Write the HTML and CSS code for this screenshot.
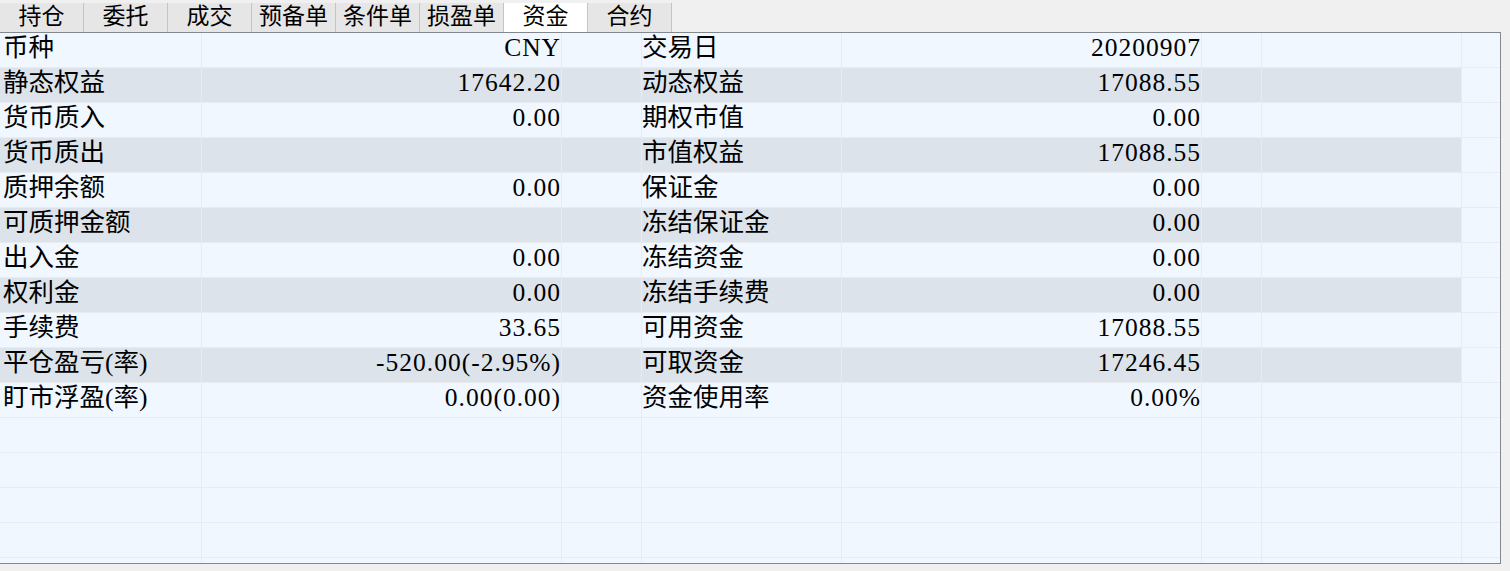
FILE: index.html
```html
<!DOCTYPE html>
<html lang="zh-CN">
  <head>
    <meta charset="UTF-8" />
    <title>资金</title>
    <link rel="stylesheet" href="styles.css">
  </head>
  <body>
    <div class="tabs">
      <div class="tab">持仓</div>
      <div class="tab">委托</div>
      <div class="tab">成交</div>
      <div class="tab">预备单</div>
      <div class="tab">条件单</div>
      <div class="tab">损盈单</div>
      <div class="tab active">资金</div>
      <div class="tab">合约</div>
    </div>
    <div class="grid" id="grid"></div>
    <script>
      const rows = [
        ["币种", "CNY", "交易日", "20200907"],
        ["静态权益", "17642.20", "动态权益", "17088.55"],
        ["货币质入", "0.00", "期权市值", "0.00"],
        ["货币质出", "", "市值权益", "17088.55"],
        ["质押余额", "0.00", "保证金", "0.00"],
        ["可质押金额", "", "冻结保证金", "0.00"],
        ["出入金", "0.00", "冻结资金", "0.00"],
        ["权利金", "0.00", "冻结手续费", "0.00"],
        ["手续费", "33.65", "可用资金", "17088.55"],
        ["平仓盈亏(率)", "-520.00(-2.95%)", "可取资金", "17246.45"],
        ["盯市浮盈(率)", "0.00(0.00)", "资金使用率", "0.00%"],
      ];
      const grid = document.getElementById("grid");

      // 11 data rows, then empty rows to fill the panel
      for (let i = 0; i < 16; i++) {
        const data = rows[i] || ["", "", "", ""];
        const row = document.createElement("div");
        row.className = "row";
        if (i % 2 === 1 && i < rows.length) row.classList.add("alt");
        const cells = [
          [data[0], "label first"],
          [data[1], "value"],
          ["", ""],
          [data[2], "label"],
          [data[3], "value"],
          ["", ""],
          ["", ""],
          ["", "last"],
        ];
        cells.forEach(([text, cls]) => {
          const cell = document.createElement("div");
          cell.className = "cell " + cls;
          cell.textContent = text;
          row.appendChild(cell);
        });
        grid.appendChild(row);
      }
    </script>
  </body>
</html>
```

FILE: styles.css
```css
body {
  margin: 0;
  background: #f0f0f0;
  font-family: "Liberation Serif", "Noto Sans CJK SC", serif;
  color: #000;
  overflow: hidden;
}

.tabs {
  display: flex;
  margin-top: 3px;
  height: 29px;
}

.tab {
  width: 84px;
  box-sizing: border-box;
  border-right: 1px solid #c4c4c4;
  background: #e6e6e6;
  text-align: center;
  font-size: 23px;
  line-height: 28px;
}

.tab.active {
  background: #ffffff;
}

.grid {
  width: 1501px;
  height: 532px;
  box-sizing: border-box;
  border: 1px solid #828790;
  border-left: none;
  background: #f0f7ff;
  overflow: hidden;
}

.row {
  display: grid;
  grid-template-columns: 202px 360px 80px 200px 360px 60px 200px 38px;
  height: 35px;
}

.cell {
  box-sizing: border-box;
  border-right: 1px solid #e8ecf0;
  border-bottom: 1px solid #e8ecf0;
  font-size: 25.5px;
  line-height: 30px;
  white-space: nowrap;
  overflow: hidden;
}

.cell.label {
  padding-left: 0;
}

.cell.label.first {
  padding-left: 3px;
}

.cell.value {
  text-align: right;
  padding-right: 0;
  letter-spacing: 1px;
}

.cell.last {
  border-right: none;
}

.row.alt .cell {
  background: #dde3ea;
}

.row.alt .cell.last {
  background: #f0f7ff;
}
```
